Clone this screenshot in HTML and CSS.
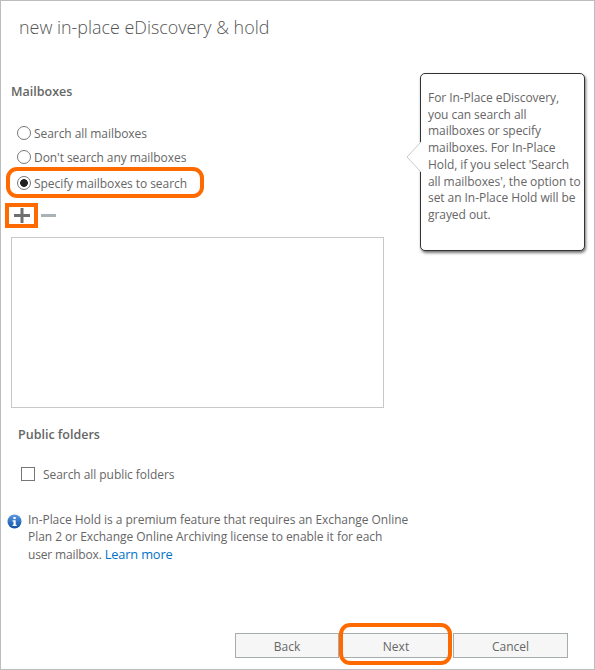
FILE: index.html
```html
<!DOCTYPE html>
<html lang="en">
<head>
<meta charset="utf-8">
<title>new in-place eDiscovery &amp; hold</title>
<link rel="stylesheet" href="styles.css">
</head>
<body>
<main class="dialog">
  <h1 class="title">new in-place eDiscovery &amp; hold</h1>
  <div class="content">
    <section class="mailboxes">
      <h2 class="heading">Mailboxes</h2>
      <div class="radios">
        <label class="radio-row"><span class="radio"></span>Search all mailboxes</label>
        <label class="radio-row"><span class="radio"></span>Don't search any mailboxes</label>
        <label class="radio-row selected-row"><span class="radio checked"></span>Specify mailboxes to search</label>
      </div>
      <div class="tools">
        <span class="add-box">
          <svg class="tool-icon" width="16" height="15" viewBox="0 0 16 15"><path d="M6.500 0h3v6h6.500v3h-6.500v6h-3v-6h-6.500v-3h6.500z" fill="#6e6e6e"/></svg>
        </span>
        <svg class="minus-icon" width="15" height="3" viewBox="0 0 15 3"><rect width="15" height="3" fill="#a9b3b7"/></svg>
      </div>
      <div class="listbox"></div>
    </section>
    <aside class="callout">
      <svg class="callout-arrow" width="15" height="32" viewBox="0 0 15 32"><path d="M15 1L1 16l14 15" fill="#fff" stroke="#c9c9c9"/></svg>
      For In-Place eDiscovery, you can search all mailboxes or specify mailboxes. For In-Place Hold, if you select 'Search all mailboxes', the option to set an In-Place Hold will be grayed out.
    </aside>
  </div>
  <section class="public">
    <h2 class="heading">Public folders</h2>
    <label class="check-row"><span class="checkbox"></span>Search all public folders</label>
  </section>
  <section class="info">
    <svg class="info-icon" width="15" height="15" viewBox="0 0 15 15">
      <defs><linearGradient id="ig" x1="0" y1="0" x2="0" y2="1"><stop offset="0" stop-color="#5b9ae0"/><stop offset="1" stop-color="#0f4fa8"/></linearGradient></defs>
      <circle cx="7.500" cy="7.500" r="7" fill="url(#ig)"/>
      <rect x="6.400" y="3" width="2.300" height="2.100" fill="#fff"/>
      <path d="M5.500 6.200h3.200v4.600h1v1.200h-4.200v-1.200h1v-3.400h-1z" fill="#fff"/>
    </svg>
    <p class="info-text">In-Place Hold is a premium feature that requires an Exchange Online<br>Plan 2 or Exchange Online Archiving license to enable it for each<br><span class="last-line">user mailbox. <a class="link" href="#">Learn more</a></span></p>
  </section>
  <footer class="buttons">
    <button class="btn back">Back</button>
    <button class="btn next">Next</button>
    <button class="btn cancel">Cancel</button>
  </footer>
</main>
</body>
</html>
```
FILE: styles.css
```css
*, *::after { box-sizing: border-box; }
html, body { margin: 0; padding: 0; background: #fff; }
body {
  font-family: "Open Sans", "Noto Sans", sans-serif;
  font-size: 12px;
  color: #666;
}
.dialog {
  position: relative;
  width: 595px;
  height: 670px;
  border: 1px solid #bdbdbd;
  overflow: hidden;
}
.title {
  margin: 0;
  padding: 14px 0 0 18px;
  height: 72px;
  font-weight: 300;
  font-size: 17.900px;
  line-height: 25px;
  color: #555;
}
.content { display: flex; align-items: flex-start; }
.mailboxes { width: 419px; padding: 10px 0 0 10px; }
.heading {
  margin: 0;
  font-size: 12.500px;
  font-weight: 600;
  line-height: 18px;
  color: #666;
}
.radios { margin-top: 20px; padding-left: 6px; }
.radio-row {
  display: flex;
  align-items: center;
  height: 24px;
  letter-spacing: -0.06px;
}
.radio {
  width: 14px;
  height: 14px;
  margin-right: 3px;
  border: 1px solid #777;
  border-radius: 50%;
  background: #fff;
  flex: none;
}
.radio.checked { background: radial-gradient(circle, #222 0 3.500px, #fff 4.200px); }
.selected-row {
  position: relative;
  height: 26px;
  margin-top: 1px;
}
.selected-row::after {
  content: "";
  position: absolute;
  left: -11px;
  top: -3px;
  width: 198px;
  height: 31px;
  border: 4px solid #ff6a00;
  border-radius: 11px;
}
.tools { display: flex; align-items: center; height: 25px; margin-top: 7px; }
.add-box {
  display: flex;
  align-items: center;
  justify-content: center;
  width: 33px;
  height: 25px;
  margin-left: -6px;
  margin-right: 3px;
  border: 4px solid #ff6a00;
}
.minus-icon { flex: none; }
.listbox {
  width: 373px;
  height: 171px;
  margin-top: 9px;
  border: 1px solid #c8c8c8;
}
.callout {
  position: relative;
  width: 165px;
  height: 178px;
  padding: 16px 2px 0 7px;
  line-height: 16.700px;
  background: #fff;
  border: 1px solid #333;
  border-radius: 5px;
  box-shadow: 1px 2px 3px rgba(0,0,0,.55);
  letter-spacing: -0.06px;
}
.callout-arrow { position: absolute; left: -15px; top: 67px; }
.public { padding: 18px 0 0 17px; }
.check-row {
  display: flex;
  align-items: center;
  height: 18px;
  margin-top: 21px;
  padding-left: 3px;
  letter-spacing: -0.06px;
}
.checkbox {
  width: 14px;
  height: 14px;
  margin-right: 8px;
  border: 1px solid #777;
  flex: none;
}
.info { display: flex; padding: 28px 0 0 6px; }
.info-icon { flex: none; margin: 3px 6px 0 0; }
.info-text {
  margin: 0;
  line-height: 17px;
  letter-spacing: -0.04px;
}
.last-line { display: inline-block; margin-top: 1px; letter-spacing: -0.15px; }
.link { color: #0072c6; text-decoration: none; font-size: 12.800px; }
.buttons {
  position: absolute;
  right: 26px;
  bottom: 11px;
  display: flex;
  gap: 3px;
}
.btn {
  height: 25px;
  padding: 1px 0 0;
  font: inherit;
  color: #666;
  background: #f6f6f6;
  border: 1px solid #a6adad;
}
.back { width: 104px; }
.next { position: relative; width: 108px; }
.cancel { width: 115px; }
.next::after {
  content: "";
  position: absolute;
  left: -4px;
  top: -11px;
  width: 113px;
  height: 42px;
  border: 4px solid #ff6a00;
  border-radius: 11px;
}
```
